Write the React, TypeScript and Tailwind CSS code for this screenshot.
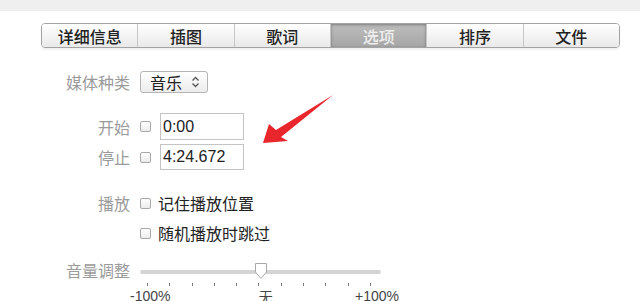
import React from "react";

const cjk = "font-['Noto_Sans_CJK_SC','Noto_Sans',sans-serif]";

const tabs = ["详细信息", "插图", "歌词", "选项", "排序", "文件"];

function Checkbox() {
  return (
    <span className="inline-block w-[11px] h-[11px] rounded-[2px] border border-[#a8a8a8] bg-gradient-to-b from-white to-[#ececec] shrink-0" />
  );
}

function Label({ text }: { text: string }) {
  return (
    <div className="w-[130px] shrink-0 text-right text-[16px] leading-[22px] text-[#9b9b9b]">
      {text}
    </div>
  );
}

function TimeInput({ value, tall }: { value: string; tall?: boolean }) {
  return (
    <div
      className={`w-[84px] ${tall ? "h-[27px]" : "h-[26px]"} border border-[#c4c4c4] bg-white flex items-center pl-[2px] text-[16px] text-[#222] font-['Liberation_Sans',sans-serif]`}
    >
      {value}
    </div>
  );
}

function Arrow() {
  return (
    <svg className="absolute left-0 top-0 pointer-events-none" width="640" height="301">
      <polygon
        points="263,143 269,124 276,130 333,95 281,137 288,141"
        fill="#e8262b"
      />
    </svg>
  );
}

function VolumeSlider() {
  const ticks = Array.from({ length: 11 });
  return (
    <div className="relative w-[241px] h-[42px] ml-[10px]">
      <div className="absolute left-0 right-0 top-[11px] h-[4px] rounded-full bg-[#d4d4d4]" />
      <svg className="absolute left-[114px] top-[3px]" width="14" height="18">
        <path d="M1.5 1.5 H12.5 V10 L7 16.5 L1.5 10 Z" fill="#ffffff" stroke="#a9a9a9" strokeWidth="1" />
      </svg>
      <div className="absolute left-[7px] right-[10px] top-[24px] flex justify-between">
        {ticks.map((_, i) => (
          <span key={i} className="block w-[1px] h-[3px] bg-[#777]" />
        ))}
      </div>
      <div className="absolute left-[-10px] right-[-18px] top-[29px] flex justify-between text-[14px] leading-[16px] text-[#444] font-['Liberation_Sans',sans-serif]">
        <span>-100%</span>
        <span className={`${cjk} ml-[6px]`}>无</span>
        <span>+100%</span>
      </div>
    </div>
  );
}

export default function App() {
  return (
    <div className={`relative w-[640px] h-[301px] bg-white overflow-hidden ${cjk}`}>
      <div className="h-[11px] bg-[#efefef]" />

      {/* 标签栏 */}
      <div className="mt-[12px] ml-[41px] w-[579px] h-[25px] flex rounded-[4px] border border-[#a3a3a3] overflow-hidden shadow-[0_2px_2px_rgba(0,0,0,0.06)]">
        {tabs.map((t, i) => {
          const active = t === "选项";
          return (
            <div
              key={t}
              className={`flex-1 flex items-center justify-center text-[16px] leading-none font-medium ${
                i > 0 ? "border-l border-[#c6c6c6]" : ""
              } ${
                active
                  ? "bg-gradient-to-b from-[#bdbdbd] to-[#a6a6a6] text-[#eeeeee] shadow-[inset_0_1px_3px_rgba(0,0,0,0.35)]"
                  : "bg-gradient-to-b from-white to-[#e9e9e9] text-[#222]"
              }`}
            >
              {t}
            </div>
          );
        })}
      </div>

      {/* 媒体种类 */}
      <div className="mt-[23px] flex items-center">
        <Label text="媒体种类" />
        <div className="ml-[10px] w-[68px] h-[22px] rounded-[3px] border border-[#b4b4b4] bg-gradient-to-b from-white to-[#ececec] flex items-center pl-[9px] text-[16px] text-[#222]">
          <span>音乐</span>
          <svg className="ml-[9px]" width="9" height="12" viewBox="0 0 9 12">
            <path d="M1.5 4.5 L4.5 1.5 L7.5 4.5 M1.5 7.5 L4.5 10.5 L7.5 7.5" fill="none" stroke="#555" strokeWidth="1.3" />
          </svg>
        </div>
      </div>

      {/* 开始 / 停止 */}
      <div className="mt-[20px] flex items-center">
        <Label text="开始" />
        <div className="ml-[10px] flex items-center gap-[9px]">
          <Checkbox />
          <TimeInput value="0:00" tall />
        </div>
      </div>
      <div className="mt-[4px] flex items-center">
        <Label text="停止" />
        <div className="ml-[10px] flex items-center gap-[9px]">
          <Checkbox />
          <TimeInput value="4:24.672" />
        </div>
      </div>

      {/* 播放 */}
      <div className="mt-[22px] flex items-center">
        <Label text="播放" />
        <div className="ml-[10px] flex items-center gap-[7px] text-[16px] leading-[22px] text-[#222]">
          <Checkbox />
          <span>记住播放位置</span>
        </div>
      </div>
      <div className="mt-[8px] flex items-center">
        <div className="w-[130px] shrink-0" />
        <div className="ml-[10px] flex items-center gap-[7px] text-[16px] leading-[22px] text-[#222]">
          <Checkbox />
          <span>随机播放时跳过</span>
        </div>
      </div>

      {/* 音量调整 */}
      <div className="mt-[15px] flex items-start">
        <Label text="音量调整" />
        <VolumeSlider />
      </div>

      <Arrow />
    </div>
  );
}
